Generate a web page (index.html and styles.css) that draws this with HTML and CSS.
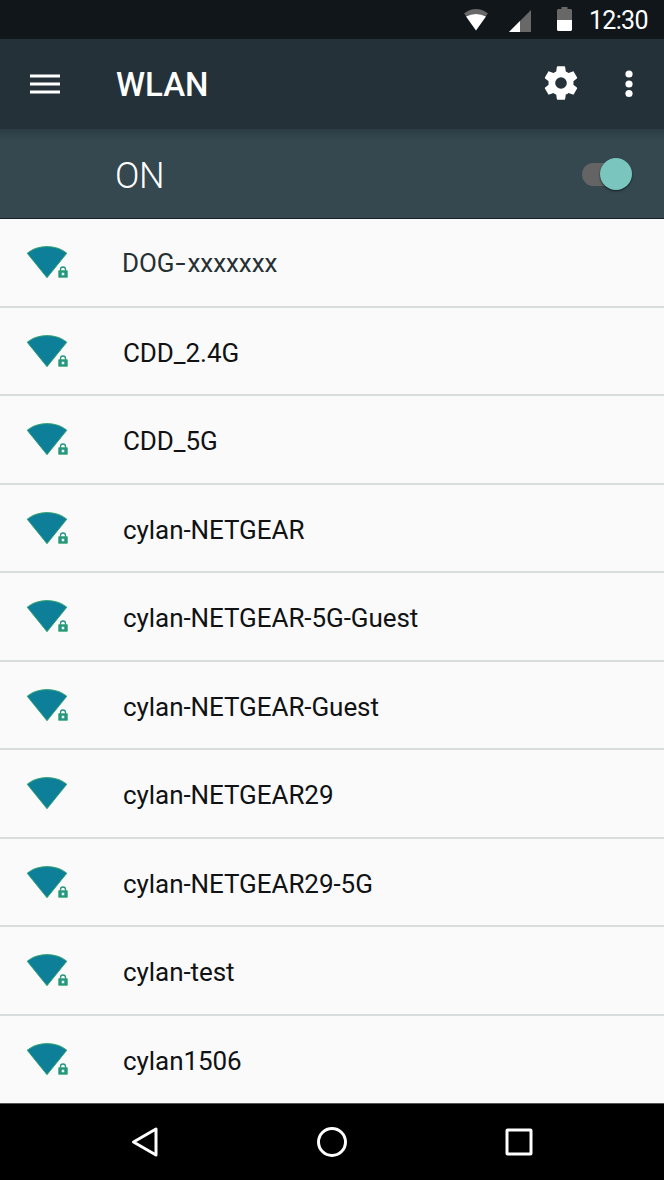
FILE: index.html
```html
<!DOCTYPE html>
<html lang="en">
<head>
<meta charset="utf-8">
<title>WLAN</title>
<link rel="stylesheet" href="styles.css">
</head>
<body>
<svg class="defs" width="0" height="0" aria-hidden="true">
  <symbol id="wifi" viewBox="0 0 44 34">
    <path class="fan" d="M1.200 8.200Q9.500 1.600 21 1.600T40.800 8.200L21 32.700Z"/>
  </symbol>
  <symbol id="lock" viewBox="0 0 10 12">
    <path class="shackle" d="M2.500 5V3.500a2.500 2.500 0 0 1 5 0V5"/>
    <path class="lock-body" d="M.7 4.700H9.300V11.300H.7Z"/>
    <path class="keyhole" d="M3.700 6.700h2.600v2.600H3.700z"/>
  </symbol>
</svg>
<div class="screen">
  <header class="status">
    <svg class="st-wifi" width="24" height="22" viewBox="0 0 24 22"><path fill="#686868" d="M0 4.500Q12-4.300 24 4.500L19.500 10H4.500Z"/><path fill="#fff" d="M2 7.500Q12 2.500 22 7.500L12 21.500Z"/></svg>
    <svg class="st-signal" width="23" height="22" viewBox="0 0 23 22"><path fill="#686868" d="M22 0V22H0Z"/><path fill="#fff" d="M11 11V22H0Z"/></svg>
    <svg class="st-battery" width="16" height="25" viewBox="0 0 16 25"><path fill="#686868" d="M4.500 0h6v2H14l1 1v11H0V3l1-1h3.500z"/><path fill="#fff" d="M0 13h15v10l-1 1H1l-1-1z"/></svg>
    <span class="clock">12:30</span>
  </header>
  <div class="appbar">
    <svg class="menu" width="30" height="21" viewBox="0 0 30 21"><path fill="#fff" d="M0 .5h30v3H0zM0 8.500h30v3H0zM0 16.500h30v3H0z"/></svg>
    <h1 class="title">WLAN</h1>
    <svg class="gear" width="40" height="40" viewBox="0 0 24 24"><path fill="#fff" d="M19.430 12.980c.04-.32.07-.64.07-.98s-.03-.66-.07-.98l2.110-1.650c.19-.15.24-.42.12-.64l-2-3.460c-.12-.22-.39-.3-.61-.22l-2.490 1c-.52-.4-1.080-.73-1.690-.98l-.38-2.650C14.460 2.180 14.250 2 14 2h-4c-.25 0-.46.18-.49.42l-.38 2.650c-.61.25-1.170.59-1.690.98l-2.490-1c-.23-.09-.49 0-.61.22l-2 3.460c-.13.22-.07.49.12.64l2.110 1.650c-.04.32-.07.65-.07.98s.03.66.07.98l-2.110 1.650c-.19.15-.24.42-.12.64l2 3.460c.12.22.39.3.61.22l2.490-1c.52.4 1.080.73 1.690.98l.38 2.650c.03.24.24.42.49.42h4c.25 0 .46-.18.49-.42l.38-2.650c.61-.25 1.170-.59 1.690-.98l2.490 1c.23.09.49 0 .61-.22l2-3.460c.12-.22.07-.49-.12-.64zM12 15.500a3.500 3.500 0 1 1 0-7 3.500 3.500 0 0 1 0 7z"/></svg>
    <svg class="more" width="8" height="28" viewBox="0 0 8 28"><g fill="#fff"><circle cx="4" cy="4" r="3.600"/><circle cx="4" cy="14" r="3.600"/><circle cx="4" cy="23.500" r="3.600"/></g></svg>
  </div>
  <div class="switchbar">
    <span class="on">ON</span>
    <span class="toggle"><span class="thumb"></span></span>
  </div>
  <ul class="list">
    <li class="row dog"><span class="icon"><svg class="signal"><use href="#wifi"/></svg><svg class="lock"><use href="#lock"/></svg></span><span class="name">DOG<span class="dash">-</span>xxxxxxx</span></li>
    <li class="row"><span class="icon"><svg class="signal"><use href="#wifi"/></svg><svg class="lock"><use href="#lock"/></svg></span><span class="name">CDD_2.4G</span></li>
    <li class="row"><span class="icon"><svg class="signal"><use href="#wifi"/></svg><svg class="lock"><use href="#lock"/></svg></span><span class="name">CDD_5G</span></li>
    <li class="row"><span class="icon"><svg class="signal"><use href="#wifi"/></svg><svg class="lock"><use href="#lock"/></svg></span><span class="name">cylan-NETGEAR</span></li>
    <li class="row"><span class="icon"><svg class="signal"><use href="#wifi"/></svg><svg class="lock"><use href="#lock"/></svg></span><span class="name">cylan-NETGEAR-5G-Guest</span></li>
    <li class="row"><span class="icon"><svg class="signal"><use href="#wifi"/></svg><svg class="lock"><use href="#lock"/></svg></span><span class="name">cylan-NETGEAR-Guest</span></li>
    <li class="row"><span class="icon"><svg class="signal"><use href="#wifi"/></svg></span><span class="name">cylan-NETGEAR29</span></li>
    <li class="row"><span class="icon"><svg class="signal"><use href="#wifi"/></svg><svg class="lock"><use href="#lock"/></svg></span><span class="name">cylan-NETGEAR29-5G</span></li>
    <li class="row"><span class="icon"><svg class="signal"><use href="#wifi"/></svg><svg class="lock"><use href="#lock"/></svg></span><span class="name">cylan-test</span></li>
    <li class="row"><span class="icon"><svg class="signal"><use href="#wifi"/></svg><svg class="lock"><use href="#lock"/></svg></span><span class="name">cylan1506</span></li>
  </ul>
  <nav class="nav">
    <svg width="32" height="32" viewBox="0 0 32 32"><path d="M27 3V29L4.500 16Z"/></svg>
    <svg width="32" height="32" viewBox="0 0 32 32"><circle cx="16" cy="16" r="13.500"/></svg>
    <svg width="32" height="32" viewBox="0 0 32 32"><rect x="4" y="4" width="24" height="24" rx=".5"/></svg>
  </nav>
</div>
</body>
</html>
```
FILE: styles.css
```css
* { box-sizing: border-box; }
body { margin: 0; font-family: Roboto, "Liberation Sans", sans-serif; }
.defs { position: absolute; }
.screen { width: 664px; height: 1180px; display: flex; flex-direction: column; overflow: hidden; background: #fafafa; }
svg { flex: none; display: block; }

.status { height: 39px; background: #101619; display: flex; align-items: flex-start; padding-left: 464px; color: #fff; }
.st-wifi { margin-top: 9px; }
.st-signal { margin: 9.500px 0 0 21px; }
.st-battery { margin: 7px 0 0 25px; }
.clock { margin: 6px 0 0 16px; font-size: 25px; line-height: 30px; letter-spacing: -.7px; }

.appbar { height: 90px; background: #243138; display: flex; align-items: center; padding-left: 30px; color: #fff; }
.title { width: 424px; margin: 2px 0 0 56px; font-size: 33px; line-height: 40px; font-weight: 500; }
.gear { margin: -2px 0 0 .5px; }
.more { margin-left: 44px; }

.switchbar { height: 90px; background: linear-gradient(#2c3e45, #35474f 12px); border-bottom: 1px solid #182126; display: flex; align-items: center; padding: 0 32px 0 115px; color: #fff; }
.on { flex: 1; margin-top: 4px; font-size: 36px; line-height: 42px; font-weight: 300; letter-spacing: -.3px; }
.toggle { width: 50px; height: 23px; margin-top: 1px; border-radius: 12px; background: #646464; display: flex; align-items: center; justify-content: flex-end; }
.thumb { width: 32px; height: 32px; flex: none; border-radius: 50%; background: #7ac6be; box-shadow: 0 1px 2px #142025; }

.list { list-style: none; margin: 0; padding: 0; height: 884px; display: grid; grid-template-rows: repeat(10, 88.500px); overflow: hidden; }
.row { display: flex; align-items: flex-start; padding-left: 26px; border-bottom: 2px solid #d9dcdc; }
.row:last-child { border-bottom: 0; }
.icon { width: 97px; display: flex; padding-top: 26px; }
.signal { width: 44px; height: 34px; }
.lock { width: 10px; height: 12px; margin: 21px 0 0 -12px; }
.fan { fill: #0d7f98; stroke: #33a373; stroke-width: 1; }
.shackle { fill: none; stroke: #249484; stroke-width: 1.300; }
.lock-body { fill: #249484; stroke: #35a56c; stroke-width: .8; }
.keyhole { fill: #e5f3ef; }
.name { margin-top: 29px; font-size: 26px; line-height: 32px; letter-spacing: -.06px; color: #101214; white-space: nowrap; }
.dog .name { margin: 28px 0 0 -1px; color: #263032; }
.dash { display: inline-block; width: 13px; text-align: center; transform: scaleX(1.400); }

.nav { height: 77px; background: #000; border-top: 1px solid #555; display: flex; align-items: center; justify-content: center; gap: 155px; padding-bottom: 1px; }
.nav svg { fill: none; stroke: #fff; stroke-width: 3; stroke-linejoin: round; }
```
